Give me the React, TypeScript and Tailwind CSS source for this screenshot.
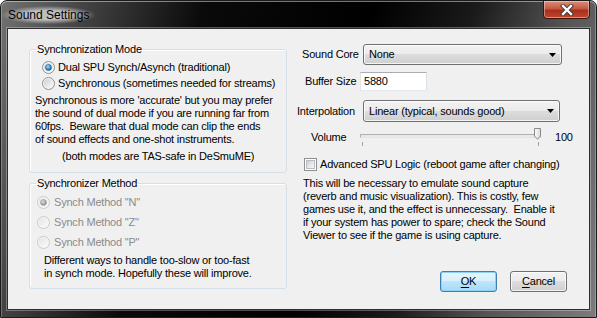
import React from 'react';

const Radio: React.FC<{ id: string; checked?: boolean; disabled?: boolean }> = ({ id, checked, disabled }) => (
  <svg width="13" height="13" viewBox="0 0 13 13" className="shrink-0">
    <defs>
      <linearGradient id={`${id}-f`} x1="0" y1="0" x2="1" y2="1">
        <stop offset="0" stopColor={disabled ? '#e4e4e4' : '#cfcfcf'} />
        <stop offset="1" stopColor="#fbfbfb" />
      </linearGradient>
      <radialGradient id={`${id}-d`} cx="0.4" cy="0.35" r="0.75">
        <stop offset="0" stopColor={disabled ? '#e0e0e0' : '#a8e6ff'} />
        <stop offset="0.55" stopColor={disabled ? '#a8a8a8' : '#2f94d8'} />
        <stop offset="1" stopColor={disabled ? '#8a8a8a' : '#0d4a86'} />
      </radialGradient>
    </defs>
    <circle cx="6.5" cy="6.5" r="6" fill="#f6f6f6" stroke={disabled ? '#c9c9c9' : '#8f8f8f'} />
    <circle cx="6.5" cy="6.5" r="4.6" fill={`url(#${id}-f)`} />
    {checked && <circle cx="6.5" cy="6.5" r="3" fill={`url(#${id}-d)`} stroke={disabled ? '#9a9a9a' : '#1d5a8f'} strokeWidth="0.6" />}
  </svg>
);

const Combo: React.FC<{ text: string; width: string; height: string }> = ({ text, width, height }) => (
  <div
    className={`flex items-center ${width} ${height} rounded-[3px] border border-[#707070] bg-[linear-gradient(#f2f2f2_0%,#ebebeb_50%,#dddddd_50%,#cfcfcf_100%)] pl-[5px] pr-[5px] shadow-[inset_0_0_0_1px_rgba(255,255,255,0.75)]`}
  >
    <span className="flex-1 whitespace-nowrap">{text}</span>
    <svg width="7" height="4" viewBox="0 0 7 4">
      <polygon points="0,0 7,0 3.5,4" fill="#000" />
    </svg>
  </div>
);

export default function App() {
  return (
    <div className="w-[597px] h-[318px] flex flex-col rounded-t-[7px] border border-[#1b1b1b] bg-[linear-gradient(105deg,#727272_0%,#454545_12%,#0a0a0a_30%,#000_55%,#1a1a1a_70%,#555_84%,#7c7c7c_100%)] shadow-[inset_0_1px_0_rgba(255,255,255,0.45),inset_1px_0_0_rgba(255,255,255,0.25),inset_-1px_0_0_rgba(255,255,255,0.25)] font-['Liberation_Sans',Arial,sans-serif] overflow-hidden">
      {/* title bar */}
      <div className="flex items-start justify-between h-[27px] shrink-0">
        <span className="mt-[5px] ml-[1px] px-[6px] py-[2px] text-[12px] leading-[14px] text-black bg-[radial-gradient(ellipse_at_center,rgba(225,225,225,0.75)_35%,rgba(200,200,200,0)_72%)]">
          Sound Settings
        </span>
        <div className="mr-[6px] mt-[-1px] w-[47px] h-[19px] flex items-center justify-center rounded-b-[4px] border border-[#3b140c] bg-[linear-gradient(#dc8f7e_0%,#c7583f_45%,#a9301b_55%,#c2452a_100%)] shadow-[inset_0_0_0_1px_rgba(255,255,255,0.4)]">
          <svg width="14" height="12" viewBox="0 0 14 12">
            <path d="M3 2 L11 10 M11 2 L3 10" stroke="#3a3a3a" strokeWidth="4.2" strokeLinecap="square" />
            <path d="M3 2 L11 10 M11 2 L3 10" stroke="#fff" strokeWidth="2.4" strokeLinecap="square" />
          </svg>
        </div>
      </div>

      {/* client area */}
      <div className="ml-[6px] w-[583px] h-[282px] border border-[#2e2e2e] bg-[#f0f0f0] shadow-[0_0_0_1px_rgba(255,255,255,0.3)] flex text-[11px] tracking-[-0.2px] text-black leading-[13px]">
        {/* left column */}
        <div className="flex flex-col pl-[21px]">
          <fieldset className="mt-[14px] w-[258px] border border-[#d5dfe5] rounded-[3px] shadow-[inset_1px_1px_0_#fff] pb-[9px]">
            <legend className="ml-[6px] px-[1px] leading-[13px]">Synchronization Mode</legend>
            <div className="pt-[3px] pl-[12px]">
              <div className="flex items-center h-[16px] gap-[3px]">
                <Radio id="r1" checked />
                <span>Dual SPU Synch/Asynch (traditional)</span>
              </div>
              <div className="flex items-center h-[16px] gap-[3px]">
                <Radio id="r2" />
                <span>Synchronous (sometimes needed for streams)</span>
              </div>
            </div>
            <p className="mt-[3px] pl-[5px] whitespace-nowrap">
              Synchronous is more 'accurate' but you may prefer
              <br />
              the sound of dual mode if you are running far from
              <br />
              60fps.&nbsp; Beware that dual mode can clip the ends
              <br />
              of sound effects and one-shot instruments.
            </p>
            <p className="mt-[4px] pl-[32px] whitespace-nowrap">(both modes are TAS-safe in DeSmuME)</p>
          </fieldset>

          <fieldset className="mt-[4px] w-[258px] border border-[#d5dfe5] rounded-[3px] shadow-[inset_1px_1px_0_#fff] pb-[8px]">
            <legend className="ml-[6px] px-[1px] leading-[13px]">Synchronizer Method</legend>
            <div className="pt-[2px] pl-[7px] text-[#8b8b8b]">
              <div className="flex items-center h-[20px] gap-[4px]">
                <Radio id="r3" checked disabled />
                <span>Synch Method "N"</span>
              </div>
              <div className="flex items-center h-[20px] gap-[4px]">
                <Radio id="r4" disabled />
                <span>Synch Method "Z"</span>
              </div>
              <div className="flex items-center h-[20px] gap-[4px]">
                <Radio id="r5" disabled />
                <span>Synch Method "P"</span>
              </div>
            </div>
            <p className="mt-[2px] pl-[14px] whitespace-nowrap">
              Different ways to handle too-slow or too-fast
              <br />
              in synch mode. Hopefully these will improve.
            </p>
          </fieldset>
        </div>

        {/* right column */}
        <div className="flex flex-col flex-1 ml-[10px] pt-[15px]">
          <div className="flex items-center h-[21px]">
            <span className="w-[66px] pl-[5px] whitespace-nowrap">Sound Core</span>
            <Combo text="None" width="w-[199px]" height="h-[21px]" />
          </div>

          <div className="flex items-center h-[19px] mt-[7px]">
            <span className="w-[63px] pl-[8px] whitespace-nowrap">Buffer Size</span>
            <div className="w-[67px] h-[19px] flex items-center pl-[3px] bg-white border border-[#e3e9ef] border-t-[#abadb3] border-l-[#e2e3ea] border-r-[#dbdfe6]">
              5880
            </div>
          </div>

          <div className="flex items-center h-[22px] mt-[9px]">
            <span className="w-[66px] whitespace-nowrap">Interpolation</span>
            <Combo text="Linear (typical, sounds good)" width="w-[197px]" height="h-[22px]" />
          </div>

          <div className="flex items-center h-[22px] mt-[4px]">
            <span className="w-[63px] pl-[14px] whitespace-nowrap">Volume</span>
            <div className="relative w-[181px] h-[22px] flex flex-col">
              <div className="mt-[8px] h-[4px] rounded-[1px] border border-[#b0b0b0] border-b-[#e4e4e4] bg-[#e7eaea]" />
              <div className="flex justify-between mt-[4px] px-[2px]">
                <div className="w-px h-[4px] bg-[#a0a0a0]" />
                <div className="w-px h-[4px] bg-[#a0a0a0] mr-[0px]" />
              </div>
              <svg width="7" height="12" viewBox="0 0 7 12" className="absolute right-[0px] top-[2px]">
                <defs>
                  <linearGradient id="th" x1="0" y1="0" x2="1" y2="0">
                    <stop offset="0" stopColor="#fdfdfd" />
                    <stop offset="1" stopColor="#d8d8d8" />
                  </linearGradient>
                </defs>
                <path d="M0.5 0.5 H6.5 V8 L3.5 11.3 L0.5 8 Z" fill="url(#th)" stroke="#8a8a8a" strokeWidth="1" />
              </svg>
            </div>
            <span className="ml-[14px]">100</span>
          </div>

          <div className="flex items-center h-[13px] mt-[10px] ml-[7px] gap-[3px]">
            <div className="w-[13px] h-[13px] border border-[#8f8f8f] bg-white p-[1px]">
              <div className="w-full h-full border border-[#b8bcc2] bg-[linear-gradient(135deg,#c9cdd3_0%,#e8e9eb_60%,#f5f5f5_100%)]" />
            </div>
            <span className="whitespace-nowrap">Advanced SPU Logic (reboot game after changing)</span>
          </div>

          <p className="mt-[6px] ml-[6px] whitespace-nowrap">
            This will be necessary to emulate sound capture
            <br />
            (reverb and music visualization). This is costly, few
            <br />
            games use it, and the effect is unnecessary.&nbsp; Enable it
            <br />
            if your system has power to spare; check the Sound
            <br />
            Viewer to see if the game is using capture.
          </p>

          <div className="mt-auto mb-[17px] flex justify-end gap-[13px] pr-[22px]">
            <button className="w-[57px] h-[21px] rounded-[3px] border border-[#3c7fb1] bg-[linear-gradient(#e5f4fc_0%,#d8effb_50%,#bee6fd_50%,#a7d9f5_100%)] shadow-[inset_0_0_0_1px_#8fd2f4]">
              <span className="underline underline-offset-[2px]">O</span>K
            </button>
            <button className="w-[57px] h-[21px] rounded-[3px] border border-[#707070] bg-[linear-gradient(#f2f2f2_0%,#ebebeb_50%,#dddddd_50%,#cfcfcf_100%)] shadow-[inset_0_0_0_1px_rgba(255,255,255,0.75)]">
              <span className="underline underline-offset-[2px]">C</span>ancel
            </button>
          </div>
        </div>
      </div>
    </div>
  );
}
